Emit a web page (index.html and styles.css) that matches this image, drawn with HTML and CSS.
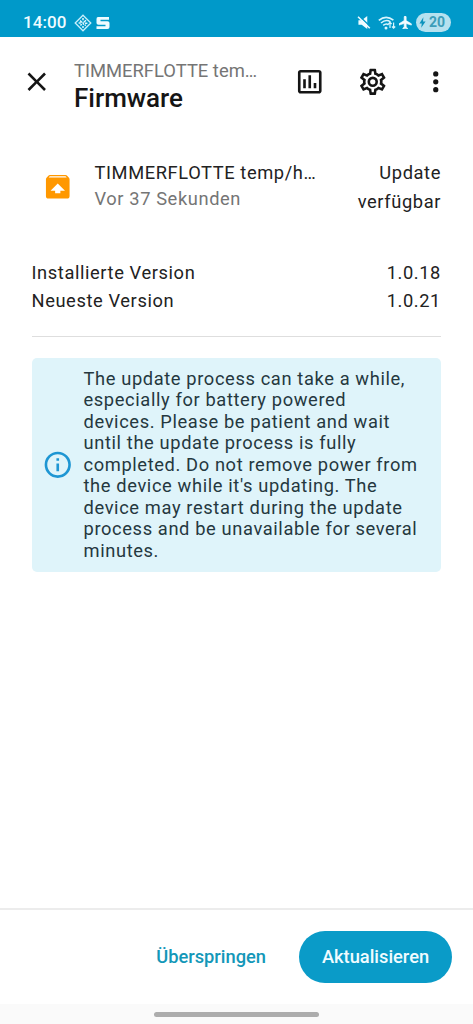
FILE: index.html
```html
<!DOCTYPE html>
<html lang="de">
<head>
<meta charset="utf-8">
<title>Firmware</title>
<link rel="stylesheet" href="styles.css">
</head>
<body>
<div class="screen">
  <div class="status">
    <span class="clock">14:00</span>
    <svg class="s-diamond" viewBox="0 0 18 18"><path d="M9 1.2 16.8 9 9 16.8 1.2 9Z" fill="none" stroke="#c9effb" stroke-width="1.3"/><path d="M9 4v2.2M6 6.6l2 1.8M12 6.2l-2.2 2M4.6 9h2.2M11 9.2h2.4M8.800 8.200l1 2.600M6.400 11.400l1.400-1.200M9 12v2M11.800 11.600l-1-.8" stroke="#dff6fd" stroke-width="1.500" fill="none"/></svg>
    <svg class="s-seat" viewBox="0 0 14 12"><path d="M2 0H13V2.800H4.500V4.200H11.500Q13.500 4.200 13.500 6V10Q13.500 12 11.500 12H.5V9.200H9.500V7.800H2.500Q.5 7.800.5 6V2Q.5 0 2 0Z" fill="#eefbff"/></svg>
    <span class="spacer"></span>
    <svg class="s-mute" viewBox="0 0 14 14"><path d="M1 4.500h3.500L10.500 0v14L4.500 9.500H1Z" fill="#effbff"/><path d="M1.800 0 14 11.500" stroke="#0099c9" stroke-width="1.600"/><path d="M.6.800 13.200 13.200" stroke="#effbff" stroke-width="1.700"/></svg>
    <svg class="s-wifi" viewBox="0 0 18 14"><g fill="none" stroke="#d9f5fd" stroke-width="1.600"><path d="M.8 4.400Q8-1.600 15.400 4.200"/><path d="M3 7Q8 2.800 12.400 5.800"/><path d="M5.200 9.400Q8 7 10.600 8.800"/><path d="M12 12V6.500M10.400 8l1.600-1.700L13.600 8M15.600 6.500V12M14 10.500l1.600 1.700 1.600-1.700" stroke-width="1.200"/></g><circle cx="8" cy="12" r="1.500" fill="#d9f5fd"/></svg>
    <svg class="s-plane" viewBox="2 2 20 20"><path d="M21 16v-2l-8-5V3.500C13 2.670 12.330 2 11.500 2S10 2.670 10 3.500V9l-8 5v2l8-2.500V19l-2 1.500V22l3.500-1 3.500 1v-1.500L13 19v-5.500Z" fill="#f4fcff" stroke="#f4fcff" stroke-width="1"/></svg>
    <span class="battery"><svg viewBox="0 0 8 12"><path d="M5 0 .5 7h2.700L2.500 12 7.500 4.800H4.600Z" fill="#0c93bd"/></svg>20</span>
  </div>

  <header class="header">
    <svg class="icon" viewBox="0 0 24 24"><path d="M19,6.410L17.590,5L12,10.590L6.410,5L5,6.410L10.590,12L5,17.590L6.410,19L12,13.410L17.590,19L19,17.590L13.410,12L19,6.410Z"/></svg>
    <div class="titles">
      <div class="subtitle">TIMMERFLOTTE tem…</div>
      <div class="title">Firmware</div>
    </div>
    <div class="actions">
      <svg class="icon" viewBox="0 0 24 24"><path d="M9 17H7V10H9V17M13 17H11V7H13V17M17 17H15V13H17V17M19 19H5V5H19V19.100M19 3H5C3.900 3 3 3.900 3 5V19C3 20.100 3.900 21 5 21H19C20.100 21 21 20.100 21 19V5C21 3.900 20.100 3 19 3Z"/></svg>
      <svg class="icon" viewBox="0 0 24 24"><path d="M12,8A4,4 0 0,1 16,12A4,4 0 0,1 12,16A4,4 0 0,1 8,12A4,4 0 0,1 12,8M12,10A2,2 0 0,0 10,12A2,2 0 0,0 12,14A2,2 0 0,0 14,12A2,2 0 0,0 12,10M10,22C9.750,22 9.540,21.820 9.500,21.580L9.130,18.930C8.500,18.680 7.960,18.340 7.440,17.940L4.950,18.950C4.730,19.030 4.460,18.950 4.340,18.730L2.340,15.270C2.210,15.050 2.270,14.780 2.460,14.630L4.570,12.970L4.500,12L4.570,11L2.460,9.370C2.270,9.220 2.210,8.950 2.340,8.730L4.340,5.270C4.460,5.050 4.730,4.960 4.950,5.050L7.440,6.050C7.960,5.660 8.500,5.320 9.130,5.070L9.500,2.420C9.540,2.180 9.750,2 10,2H14C14.250,2 14.460,2.180 14.500,2.420L14.870,5.070C15.500,5.320 16.040,5.660 16.560,6.050L19.050,5.050C19.270,4.960 19.540,5.050 19.660,5.270L21.660,8.730C21.790,8.950 21.730,9.220 21.540,9.370L19.430,11L19.500,12L19.430,13L21.540,14.630C21.730,14.780 21.790,15.050 21.660,15.270L19.660,18.730C19.540,18.950 19.270,19.040 19.050,18.950L16.560,17.950C16.040,18.340 15.500,18.680 14.870,18.930L14.500,21.580C14.460,21.820 14.250,22 14,22H10M11.250,4L10.880,6.610C9.680,6.860 8.620,7.500 7.850,8.390L5.440,7.350L4.690,8.650L6.800,10.200C6.400,11.370 6.400,12.640 6.800,13.800L4.680,15.360L5.430,16.660L7.860,15.620C8.630,16.500 9.680,17.140 10.870,17.380L11.240,20H12.760L13.130,17.390C14.320,17.140 15.370,16.500 16.140,15.620L18.570,16.660L19.320,15.360L17.200,13.810C17.600,12.640 17.600,11.370 17.200,10.200L19.310,8.650L18.560,7.350L16.150,8.390C15.380,7.500 14.320,6.860 13.120,6.620L12.750,4H11.250Z"/></svg>
      <svg class="icon" viewBox="0 0 24 24"><path d="M12,16A2,2 0 0,1 14,18A2,2 0 0,1 12,20A2,2 0 0,1 10,18A2,2 0 0,1 12,16M12,10A2,2 0 0,1 14,12A2,2 0 0,1 12,14A2,2 0 0,1 10,12A2,2 0 0,1 12,10M12,4A2,2 0 0,1 14,6A2,2 0 0,1 12,8A2,2 0 0,1 10,6A2,2 0 0,1 12,4Z"/></svg>
    </div>
  </header>

  <main class="content">
    <section class="entity">
      <svg class="icon icon-update" viewBox="0 0 24 24"><path d="M20.540,5.230C20.830,5.570 21,6 21,6.500V19A2,2 0 0,1 19,21H5A2,2 0 0,1 3,19V6.500C3,6 3.170,5.570 3.460,5.230L4.840,3.550C5.120,3.210 5.530,3 6,3H18C18.470,3 18.880,3.210 19.150,3.550L20.540,5.230M5.120,5H18.870L17.930,4H5.930L5.120,5M12,9.500L6.500,15H10V17H14V15H17.500L12,9.500Z"/></svg>
      <div class="info">
        <div>TIMMERFLOTTE temp/h…</div>
        <div class="muted">Vor 37 Sekunden</div>
      </div>
      <div class="state">Update<br>verfügbar</div>
    </section>
    <section class="versions">
      <div class="row"><span>Installierte Version</span><span>1.0.18</span></div>
      <div class="row"><span>Neueste Version</span><span>1.0.21</span></div>
    </section>
    <hr class="divider">
    <section class="alert">
      <svg class="icon icon-info" viewBox="0 0 24 24"><path d="M11,9H13V7H11M12,20C7.590,20 4,16.410 4,12C4,7.590 7.590,4 12,4C16.410,4 20,7.590 20,12C20,16.410 16.410,20 12,20M12,2A10,10 0 0,0 2,12A10,10 0 0,0 12,22A10,10 0 0,0 22,12A10,10 0 0,0 12,2M11,17H13V11H11V17Z"/></svg>
      <p>The update process can take a while,<br>especially for battery powered<br>devices. Please be patient and wait<br>until the update process is fully<br>completed. Do not remove power from<br>the device while it's updating. The<br>device may restart during the update<br>process and be unavailable for several<br>minutes.</p>
    </section>
  </main>

  <footer class="footer">
    <span class="btn-text">Überspringen</span>
    <span class="btn-fill">Aktualisieren</span>
  </footer>
  <div class="nav"><div class="handle"></div></div>
</div>
</body>
</html>
```

FILE: styles.css
```css
* { box-sizing: border-box; }
body { margin: 0; background: #fff; font-family: Roboto, sans-serif; color: #222; }
.screen { width: 473px; height: 1024px; display: flex; flex-direction: column; overflow: hidden; }
svg { display: block; flex: none; }

.status { height: 37px; flex: none; background: #0099c9; display: flex; align-items: center; padding: 8px 22px 0 23px; }
.clock { font-size: 17px; font-weight: 500; line-height: 20px; letter-spacing: 0.1px; color: #effbff; width: 51px; padding-bottom: 1px; }
.s-diamond { width: 18px; height: 18px; }
.s-seat { width: 14px; height: 12px; margin-left: 4px; }
.spacer { flex: 1; }
.s-mute { width: 14px; height: 13px; margin-right: 7px; }
.s-wifi { width: 18px; height: 14px; margin-right: 3px; }
.s-plane { width: 13px; height: 13px; margin-right: 4px; }
.battery { width: 35px; height: 19px; border-radius: 10px; background: #b5e1ef; color: #3c9db9; font-size: 14px; font-weight: 700; line-height: 19px; display: flex; align-items: center; padding-left: 3px; gap: 3px; }
.battery svg { width: 7px; height: 11px; }

.icon { width: 31.500px; height: 31.500px; fill: #151515; }

.header { height: 90px; flex: none; display: flex; align-items: center; padding: 0 21.500px 0 21px; }
.titles { margin-left: 21.500px; padding-top: 7px; }
.subtitle { font-size: 18.400px; line-height: 24px; color: #757575; white-space: nowrap; }
.title { font-size: 26px; line-height: 30px; font-weight: 500; color: #151515; }
.actions { display: flex; gap: 31.500px; margin-left: auto; }

.content { flex: 1; padding: 31px 32px 0 31.500px; font-size: 18.300px; letter-spacing: 0.600px; }
.entity { display: flex; align-items: center; height: 58px; }
.icon-update { fill: #ff9800; margin-left: 10px; }
.info { margin-left: 21.500px; line-height: 26px; white-space: nowrap; padding-bottom: 3px; }
.muted { color: #757575; }
.state { margin-left: auto; text-align: right; line-height: 29px; }
.versions { margin-top: 43px; }
.row { display: flex; justify-content: space-between; line-height: 27.500px; }
.divider { border: 0; border-top: 1px solid #dedede; margin: 22px 0 21px; }
.alert { display: flex; align-items: center; height: 214px; border-radius: 5px; background: #dff4fa; padding: 0 10px; color: #25383f; }
.alert p { margin: 0 0 0 10.500px; padding-bottom: 1px; line-height: 21.450px; letter-spacing: 0.620px; white-space: nowrap; }
.icon-info { fill: #1e96d3; }

.footer { height: 96px; flex: none; border-top: 2px solid #ececec; display: flex; align-items: center; justify-content: flex-end; padding: 0 21px; font-size: 18.300px; font-weight: 500; }
.btn-text { color: #1497b8; margin-right: 33px; padding-bottom: 2px; }
.btn-fill { width: 153px; height: 52px; line-height: 51px; border-radius: 26px; background: #0a9bc8; color: #f0fbff; text-align: center; }
.nav { height: 20px; flex: none; background: #fafafa; display: flex; justify-content: center; padding-top: 8px; }
.handle { width: 165px; height: 5px; border-radius: 3px; background: #adadad; }
```
